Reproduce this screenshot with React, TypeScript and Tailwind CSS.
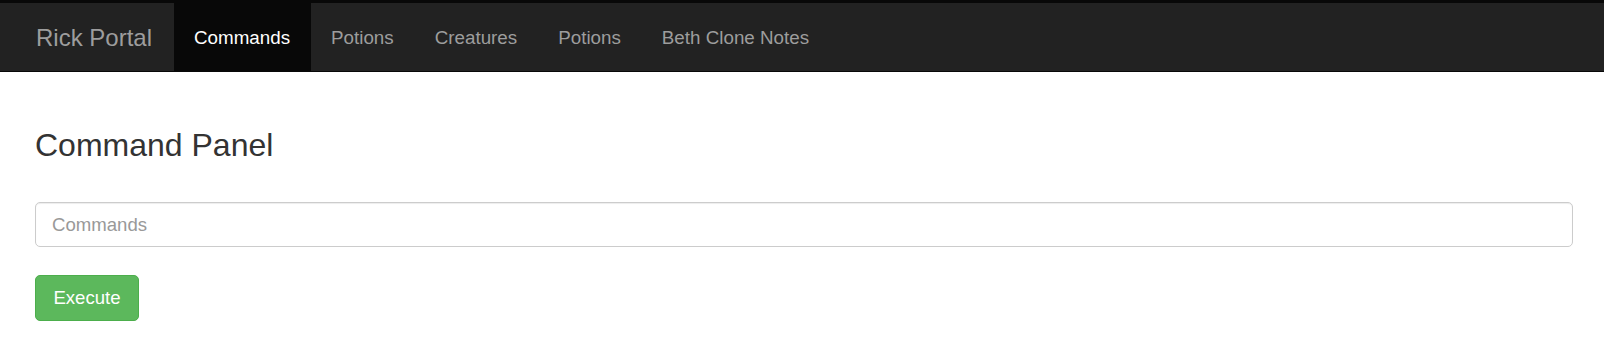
import React, { useState } from 'react';

const links = ['Commands', 'Potions', 'Creatures', 'Potions', 'Beth Clone Notes'];

export default function App() {
  const [command, setCommand] = useState('');

  return (
    <div className="min-h-[362px] bg-white font-['Liberation_Sans',Arial,sans-serif] text-[18.6px] text-[#333]">
      {/* Inverse navbar */}
      <nav className="h-[72px] flex items-stretch bg-[#222] border-t-[3px] border-b border-[#080808] pl-[16px]">
        <a className="flex items-center pt-[2px] pl-[20px] pr-[22px] text-[24px] text-[#9d9d9d]">Rick Portal</a>
        <ul className="flex items-stretch text-[18.8px]">
          {links.map((label, i) => (
            <li key={i}>
              <a
                className={
                  i === 0
                    ? 'h-full flex items-center pt-[2px] pl-[20px] pr-[21px] bg-[#080808] text-white'
                    : 'h-full flex items-center pt-[2px] pl-[20px] pr-[21px] text-[#9d9d9d]'
                }
              >
                {label}
              </a>
            </li>
          ))}
        </ul>
      </nav>

      <div className="pl-[35px] pr-[31px]">
        <h3 className="mt-[56px] text-[32px] leading-[1.1] font-normal">Command Panel</h3>

        <input
          type="text"
          value={command}
          onChange={(e) => setCommand(e.target.value)}
          placeholder="Commands"
          className="mt-[39px] block w-full h-[45px] px-[16px] border border-[#ccc] rounded-[5px] text-[#555] placeholder:text-[#999] shadow-[inset_0_1px_1px_rgba(0,0,0,0.075)] outline-none"
        />

        <button className="mt-[28px] w-[104px] h-[46px] rounded-[5px] bg-[#5cb85c] border border-[#4cae4c] text-white">
          Execute
        </button>
      </div>
    </div>
  );
}
